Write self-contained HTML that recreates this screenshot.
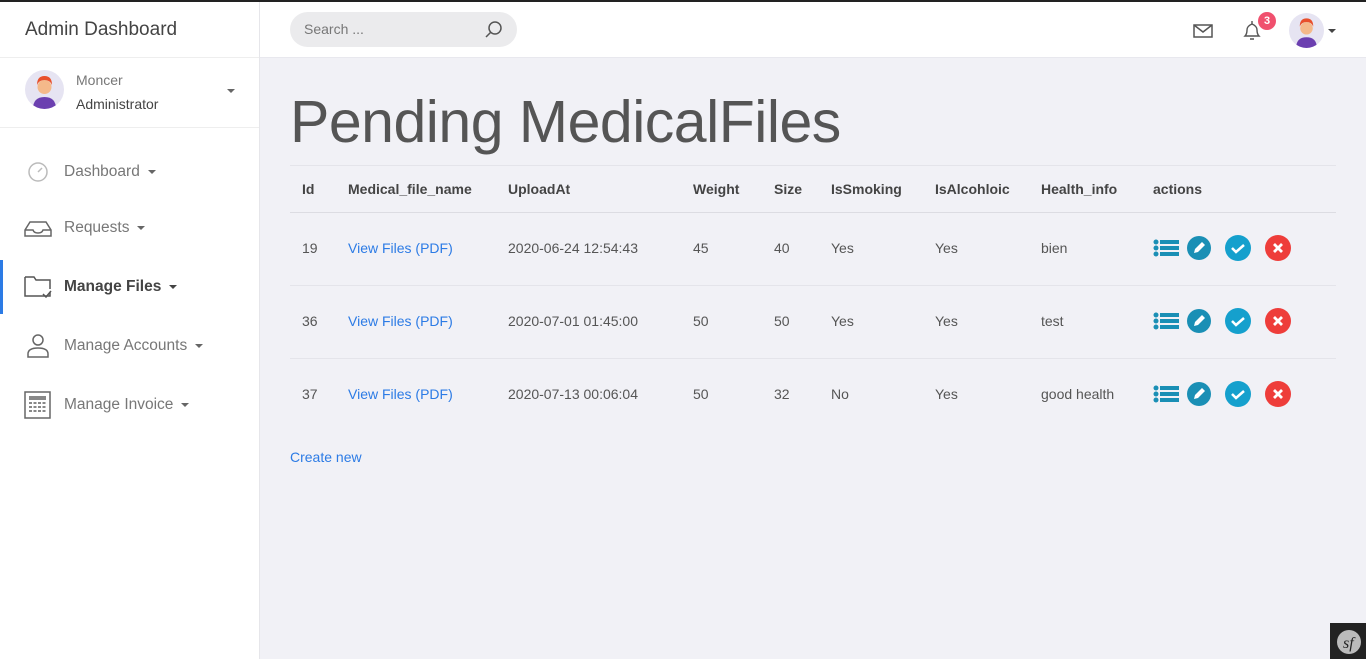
<!DOCTYPE html>
<html><head><meta charset="utf-8"><style>
*{box-sizing:border-box;margin:0;padding:0}
html,body{width:1366px;height:659px;overflow:hidden}
body{font-family:"Liberation Sans",sans-serif;background:#f1f1f6;position:relative;color:#555}
.topbar{position:absolute;left:0;top:0;width:1366px;height:2px;background:#222}
.side{position:absolute;left:0;top:2px;width:260px;height:657px;background:#fff;border-right:1px solid #e6e6ea}
.brand{height:56px;border-bottom:1px solid #eee;font-size:19px;color:#444;padding:17px 0 0 25px}
.user{height:70px;border-bottom:1px solid #eee;position:relative}
.av{position:absolute;border-radius:50%;background:#e6e4f2;overflow:hidden}
.nav{position:absolute;left:0;font-size:15.5px;color:#777;width:259px;height:54px}
.nav span{position:absolute;left:64px;top:50%;transform:translateY(-50%)}
.nav svg{position:absolute;left:23px;top:50%;transform:translateY(-50%)}
.caret{display:inline-block;width:0;height:0;border-left:4px solid transparent;border-right:4px solid transparent;border-top:4px solid #666;vertical-align:middle;margin-left:8px}
.header{position:absolute;left:260px;top:2px;width:1106px;height:56px;background:#fff;border-bottom:1px solid #e8e8ee}
.search{position:absolute;left:30px;top:10px;width:227px;height:35px;border-radius:18px;background:#ebebed;font-size:14px;color:#777;padding:9px 0 0 14px}
h1{position:absolute;left:290px;top:88px;font-weight:normal;font-size:59px;color:#555;letter-spacing:-0.5px}
table{position:absolute;left:290px;top:165px;width:1046px;border-collapse:collapse;font-size:14px}
th{text-align:left;font-weight:bold;color:#444;height:47px;border-top:1px solid #e4e4ea;border-bottom:1px solid #dcdce2;padding-left:12px}
td{height:73px;border-bottom:1px solid #e4e4ea;padding-left:12px;color:#555;vertical-align:middle;padding-bottom:2px}
tr:last-child td{border-bottom:none}
td.l{color:#2c7be5}
a{color:#2c7be5;text-decoration:none}
.act svg{vertical-align:middle;margin-right:8px}
</style></head><body>
<div class="topbar"></div>
<div class="side">
 <div class="brand">Admin Dashboard</div>
 <div class="user">
  <div class="av" style="left:25px;top:12px;width:39px;height:39px">
   <svg width="39" height="39" viewBox="0 0 39 39"><circle cx="19.5" cy="17" r="7" fill="#f4b98a"/><path d="M12 15q0-9 7.5-9t7.5 9q-2-5-7.5-5t-7.5 5z" fill="#e8502c"/><path d="M8 39q0-12 11.5-12T31 39z" fill="#6b3fb0"/></svg>
  </div>
  <div style="position:absolute;left:76px;top:14px;font-size:14px;color:#777">Moncer</div>
  <div style="position:absolute;left:76px;top:38px;font-size:14px;color:#444">Administrator</div>
  <span class="caret" style="position:absolute;left:227px;top:31px;margin:0"></span>
 </div>
 <div class="nav" style="top:143px"><svg width="30" height="24" viewBox="0 0 30 24"><circle cx="15" cy="12" r="9" fill="none" stroke="#bbb" stroke-width="1.5"/><path d="M15 12l4-4" stroke="#bbb" stroke-width="1.5"/></svg><span>Dashboard<i class="caret"></i></span></div>
 <div class="nav" style="top:199px"><svg width="30" height="24" viewBox="0 0 30 24"><path d="M2 14l5-8h16l5 8v6H2z M2 14h8q1 3 5 3t5-3h8" fill="none" stroke="#666" stroke-width="1.5"/></svg><span>Requests<i class="caret"></i></span></div>
 <div class="nav" style="top:258px;color:#444;font-weight:bold"><div style="position:absolute;left:0;top:0;width:3px;height:54px;background:#2c7be5"></div><svg width="30" height="26" viewBox="0 0 30 26"><path d="M2 3h9l2 3h14v9 M27 18v4H2V3" fill="none" stroke="#555" stroke-width="1.5"/><path d="M20 20l3 3 5-6" fill="none" stroke="#555" stroke-width="1.5"/></svg><span>Manage Files<i class="caret" style="border-top-color:#444"></i></span></div>
 <div class="nav" style="top:317px"><svg width="30" height="26" viewBox="0 0 30 26"><circle cx="15" cy="7" r="5" fill="none" stroke="#666" stroke-width="1.5"/><path d="M5 24v-3q0-6 10-6t10 6v3z" fill="none" stroke="#666" stroke-width="1.5"/></svg><span>Manage Accounts<i class="caret"></i></span></div>
 <div class="nav" style="top:376px"><svg width="30" height="28" viewBox="0 0 30 28"><rect x="2" y="1" width="25" height="26" fill="none" stroke="#666" stroke-width="1.5"/><rect x="6" y="5" width="17" height="4" fill="#888"/><path d="M6 12h17M6 16h17M6 20h17" stroke="#888" stroke-width="2" stroke-dasharray="3 1.5"/></svg><span>Manage Invoice<i class="caret"></i></span></div>
</div>
<div class="header">
 <div class="search">Search ...<svg style="position:absolute;right:14px;top:9px" width="18" height="18" viewBox="0 0 18 18"><circle cx="10" cy="7" r="6" fill="none" stroke="#555" stroke-width="1.5"/><path d="M6 11l-5 5" stroke="#555" stroke-width="1.5"/></svg></div>
 <svg style="position:absolute;left:933px;top:22px" width="20" height="14" viewBox="0 0 20 14"><rect x="1" y="1" width="18" height="12" fill="none" stroke="#555" stroke-width="1.5"/><path d="M1 1l9 7 9-7" fill="none" stroke="#555" stroke-width="1.5"/></svg>
 <svg style="position:absolute;left:982px;top:18px" width="20" height="22" viewBox="0 0 20 22"><path d="M3 16q2-2 2-6t5-6q5 2 5 6t2 6z" fill="none" stroke="#555" stroke-width="1.4"/><path d="M10 1v3M8 19h4" stroke="#555" stroke-width="1.4"/></svg>
 <div style="position:absolute;left:998px;top:10px;width:18px;height:18px;border-radius:50%;background:#f0506e;color:#fff;font-size:11px;font-weight:bold;text-align:center;line-height:18px">3</div>
 <div class="av" style="left:1029px;top:11px;width:35px;height:35px"><svg width="35" height="35" viewBox="0 0 39 39"><circle cx="19.5" cy="17" r="7" fill="#f4b98a"/><path d="M12 15q0-9 7.5-9t7.5 9q-2-5-7.5-5t-7.5 5z" fill="#e8502c"/><path d="M8 39q0-12 11.5-12T31 39z" fill="#6b3fb0"/></svg></div>
 <span class="caret" style="position:absolute;left:1068px;top:27px;margin:0;border-top-color:#444"></span>
</div>
<h1>Pending MedicalFiles</h1>
<table>
<tr><th style="width:46px">Id</th><th style="width:160px">Medical_file_name</th><th style="width:185px">UploadAt</th><th style="width:81px">Weight</th><th style="width:57px">Size</th><th style="width:104px">IsSmoking</th><th style="width:106px">IsAlcohloic</th><th style="width:112px">Health_info</th><th>actions</th></tr>
<tr><td>19</td><td class="l">View Files (PDF)</td><td>2020-06-24 12:54:43</td><td>45</td><td>40</td><td>Yes</td><td>Yes</td><td>bien</td><td class="act">ACT</td></tr>
<tr><td>36</td><td class="l">View Files (PDF)</td><td>2020-07-01 01:45:00</td><td>50</td><td>50</td><td>Yes</td><td>Yes</td><td>test</td><td class="act">ACT</td></tr>
<tr><td>37</td><td class="l">View Files (PDF)</td><td>2020-07-13 00:06:04</td><td>50</td><td>32</td><td>No</td><td>Yes</td><td>good health</td><td class="act">ACT</td></tr>
</table>
<div style="position:absolute;left:290px;top:449px;font-size:14px"><a>Create new</a></div>
<div style="position:absolute;left:1330px;top:623px;width:36px;height:36px;background:#222"><svg width="36" height="36" viewBox="0 0 36 36"><circle cx="19" cy="19" r="12" fill="#bbb"/><text x="13" y="25" font-size="16" font-style="italic" font-family="Liberation Serif,serif" fill="#222">sf</text></svg></div>
<script>
var a='<svg width="26" height="24" viewBox="0 0 26 24"><circle cx="3" cy="6" r="2.5" fill="#1a8fb5"/><circle cx="3" cy="12" r="2.5" fill="#1a8fb5"/><circle cx="3" cy="18" r="2.5" fill="#1a8fb5"/><rect x="7" y="4" width="19" height="4" fill="#1a8fb5"/><rect x="7" y="10" width="19" height="4" fill="#1a8fb5"/><rect x="7" y="16" width="19" height="4" fill="#1a8fb5"/></svg>'+
'<svg width="24" height="24" viewBox="0 0 24 24"><circle cx="12" cy="12" r="12" fill="#1a8fb5"/><path d="M7 17l1-4 7-7 3 3-7 7z" fill="#fff"/></svg>'+
'<svg width="26" height="26" viewBox="0 0 26 26" style="margin-left:6px"><circle cx="13" cy="13" r="13" fill="#15a0cd"/><path d="M7 13l4 4 8-7" fill="none" stroke="#fff" stroke-width="2.5"/></svg>'+
'<svg width="26" height="26" viewBox="0 0 26 26" style="margin-left:6px"><circle cx="13" cy="13" r="13" fill="#ee3d3a"/><path d="M9 9l8 8M17 9l-8 8" stroke="#fff" stroke-width="2.8"/></svg>';
document.querySelectorAll('.act').forEach(function(e){e.innerHTML=a});
</script>
</body></html>
